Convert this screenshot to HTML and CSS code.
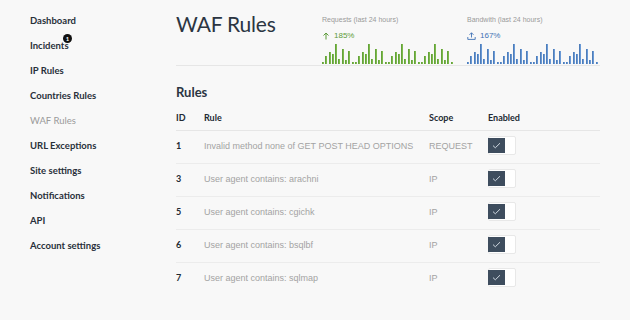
FILE: index.html
```html
<!DOCTYPE html>
<html lang="en">
<head>
    <meta charset="UTF-8">
    <title>WAF Rules</title>
    <link rel="stylesheet" href="styles.css">
</head>
<body>
    <aside class="sidebar">
        <a class="nav-item">Dashboard</a>
        <a class="nav-item">Incidents<span class="badge">1</span></a>
        <a class="nav-item">IP Rules</a>
        <a class="nav-item">Countries Rules</a>
        <a class="nav-item active">WAF Rules</a>
        <a class="nav-item">URL Exceptions</a>
        <a class="nav-item">Site settings</a>
        <a class="nav-item">Notifications</a>
        <a class="nav-item">API</a>
        <a class="nav-item">Account settings</a>
    </aside>

    <main class="content">
        <header class="page-header">
            <h1>WAF Rules</h1>
            <div class="stat">
                <div class="stat-label">Requests (last 24 hours)</div>
                <div class="stat-value green">
                    <svg width="8" height="8" viewBox="0 0 8 8"><path d="M4 7.5V1M1.5 3.5L4 1l2.5 2.5" fill="none" stroke="currentColor" stroke-width="1"/></svg>
                    185%
                </div>
                <div class="bars green-bars" id="reqBars"></div>
            </div>
            <div class="stat">
                <div class="stat-label">Bandwith (last 24 hours)</div>
                <div class="stat-value blue">
                    <svg width="9" height="8" viewBox="0 0 9 8"><path d="M4.5 5.5V0.8M2.5 2.8l2-2 2 2M0.8 5v2.4h7.4V5" fill="none" stroke="currentColor" stroke-width="0.9"/></svg>
                    167%
                </div>
                <div class="bars blue-bars" id="bwBars"></div>
            </div>
        </header>

        <h2>Rules</h2>
        <table class="rules">
            <thead>
                <tr>
                    <th class="col-id">ID</th>
                    <th class="col-rule">Rule</th>
                    <th class="col-scope">Scope</th>
                    <th>Enabled</th>
                </tr>
            </thead>
            <tbody id="rulesBody"></tbody>
        </table>
    </main>

    <script>
        const pattern = [2, 8, 12, 10, 20, 5, 15, 4, 13, 2];

        function drawBars(id) {
            const el = document.getElementById(id);
            let html = '';
            for (let g = 0; g < 4; g++) {
                pattern.forEach(h => {
                    html += `<span class="bar" style="height:${h}px"></span>`;
                });
            }
            el.innerHTML = html;
        }

        drawBars('reqBars');
        drawBars('bwBars');

        const rules = [
            { id: 1, rule: 'Invalid method none of GET POST HEAD OPTIONS', scope: 'REQUEST' },
            { id: 3, rule: 'User agent contains: arachni', scope: 'IP' },
            { id: 5, rule: 'User agent contains: cgichk', scope: 'IP' },
            { id: 6, rule: 'User agent contains: bsqlbf', scope: 'IP' },
            { id: 7, rule: 'User agent contains: sqlmap', scope: 'IP' }
        ];

        document.getElementById('rulesBody').innerHTML = rules.map(r => `
            <tr>
                <td class="col-id">${r.id}</td>
                <td class="col-rule muted">${r.rule}</td>
                <td class="col-scope muted">${r.scope}</td>
                <td>
                    <span class="toggle">
                        <span class="knob">
                            <svg width="9" height="7" viewBox="0 0 9 7"><path d="M1 3.6l2.3 2.2L8 1.2" fill="none" stroke="#dfe6ee" stroke-width="0.9"/></svg>
                        </span>
                    </span>
                </td>
            </tr>`).join('');
    </script>
</body>
</html>
```

FILE: styles.css
```css
body {
    margin: 0;
    background-color: #f8f8f8;
    font-family: 'Lato', sans-serif;
    color: #222a33;
    display: flex;
    width: 630px;
    height: 320px;
    overflow: hidden;
}

.sidebar {
    width: 146px;
    flex-shrink: 0;
    padding: 13px 0 0 30px;
    display: flex;
    flex-direction: column;
}

.nav-item {
    position: relative;
    height: 25px;
    line-height: 15px;
    font-size: 9.5px;
    font-weight: 700;
    color: #28303a;
}

.nav-item.active {
    color: #9a9a9a;
    font-weight: 400;
}

.badge {
    position: absolute;
    left: 33px;
    top: -4px;
    width: 9px;
    height: 9px;
    border-radius: 50%;
    background: #111;
    color: #fff;
    font-size: 6px;
    line-height: 9px;
    text-align: center;
}

.content {
    width: 454px;
    flex-shrink: 0;
}

.page-header {
    display: flex;
    width: 424px;
    height: 65px;
    border-bottom: 1px solid #e6e6e6;
}

h1 {
    width: 146px;
    flex-shrink: 0;
    margin: 0;
    padding-top: 11px;
    font-size: 21px;
    font-weight: 400;
    color: #2b3542;
    letter-spacing: -0.2px;
}

.stat {
    width: 145px;
    flex-shrink: 0;
    padding-top: 16px;
}

.stat-label {
    font-family: 'Liberation Sans', sans-serif;
    font-size: 7px;
    color: #9a9a9a;
    height: 10px;
}

.stat-value {
    font-family: 'Liberation Sans', sans-serif;
    font-size: 8px;
    height: 11px;
    margin-top: 4px;
    display: flex;
    align-items: center;
    gap: 4px;
}

.stat-value.green {
    color: #5d9b3a;
}

.stat-value.blue {
    color: #3f72b5;
}

.bars {
    display: flex;
    align-items: flex-end;
    gap: 1.3px;
    height: 22px;
    margin-top: 1px;
}

.bar {
    width: 2px;
}

.green-bars .bar {
    background: #7dba4c;
    box-shadow: inset 0.5px 0 0 #4f8a2c;
}

.blue-bars .bar {
    background: #6a9ad6;
    box-shadow: inset 0.5px 0 0 #34609c;
}

h2 {
    margin: 0;
    padding-top: 18px;
    height: 20px;
    font-size: 13px;
    font-weight: 700;
    color: #2b3542;
}

.rules {
    width: 424px;
    border-collapse: collapse;
}

.rules th {
    text-align: left;
    font-size: 9px;
    font-weight: 700;
    color: #222a33;
    height: 26px;
    padding: 0;
    border-bottom: 1px solid #e6e6e6;
}

.rules td {
    height: 29px;
    padding: 0 0 3px 0;
    font-size: 9px;
    border-bottom: 1px solid #ececec;
}

.rules tr:last-child td {
    border-bottom: none;
}

.rules td.col-id {
    font-weight: 700;
}

.col-id {
    width: 28px;
}

.col-rule {
    width: 225px;
}

.col-scope {
    width: 59px;
}

.muted {
    font-family: 'Liberation Sans', sans-serif;
    color: #a3a3a3;
}

.toggle {
    display: flex;
    width: 28px;
    height: 19px;
    background: #fff;
    border: 1px solid #e8e8e8;
    border-radius: 2px;
    box-sizing: border-box;
    align-items: center;
}

.knob {
    width: 17px;
    height: 15px;
    margin-left: -1px;
    background: #3e4d5e;
    display: flex;
    align-items: center;
    justify-content: center;
}
```
